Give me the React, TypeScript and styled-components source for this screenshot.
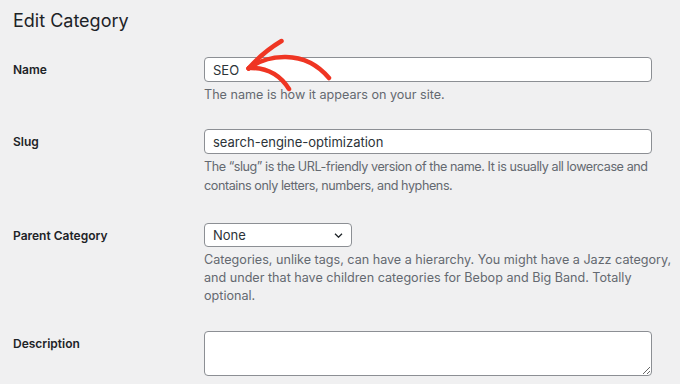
import styled, { createGlobalStyle } from "styled-components";

const GlobalStyle = createGlobalStyle`
  html, body {
    margin: 0;
    padding: 0;
    background: #f0f0f1;
  }
  body {
    font-family: Inter, "Noto Sans", "Liberation Sans", sans-serif;
    color: #1d2327;
  }
`;

const Page = styled.div`
  width: 680px;
  height: 384px;
  overflow: hidden;
  padding: 8px 28px 0 13px;
  box-sizing: border-box;
`;

const Heading = styled.h1`
  margin: 0;
  font-size: 18px;
  font-weight: 400;
  line-height: 25px;
  color: #1d2327;
`;

const FormTable = styled.div`
  display: flex;
  flex-direction: column;
  margin-top: 24px;
`;

const Row = styled.div<{ $top?: number }>`
  display: grid;
  grid-template-columns: 191px 448px;
  margin-top: ${(p) => p.$top ?? 0}px;
`;

const Label = styled.label`
  font-size: 12px;
  font-weight: 600;
  line-height: 25px;
  color: #1d2327;
`;

const Field = styled.div`
  position: relative;
  display: flex;
  flex-direction: column;
`;

const TextInput = styled.input`
  box-sizing: border-box;
  width: 100%;
  height: 25px;
  margin: 0;
  padding: 0 8px;
  border: 1px solid #8c8f94;
  border-radius: 4px;
  background: #fff;
  font-family: inherit;
  font-size: 13px;
  color: #2c3338;
  outline: none;
`;

const SelectWrap = styled.div`
  position: relative;
  width: 148px;
  height: 24px;
`;

const Select = styled.select`
  box-sizing: border-box;
  width: 100%;
  height: 100%;
  margin: 0;
  padding: 0 24px 0 8px;
  border: 1px solid #8c8f94;
  border-radius: 4px;
  background: #fff;
  font-family: inherit;
  font-size: 13px;
  color: #2c3338;
  appearance: none;
  outline: none;
`;

const Chevron = styled.svg`
  position: absolute;
  right: 9px;
  top: 10px;
  pointer-events: none;
`;

const TextArea = styled.textarea`
  box-sizing: border-box;
  width: 100%;
  height: 45px;
  margin: 0;
  padding: 4px 8px;
  border: 1px solid #8c8f94;
  border-radius: 4px;
  background: #fff;
  font-family: inherit;
  font-size: 13px;
  outline: none;
  display: block;
`;

const Help = styled.p<{ $tight?: boolean }>`
  margin: 4px 0 0;
  font-size: 12.6px;
  line-height: 18.3px;
  letter-spacing: ${(p) => (p.$tight ? "-0.42px" : "0")};
  color: #646970;
  white-space: nowrap;
`;

const Arrow = styled.svg`
  position: absolute;
  left: 42px;
  top: -19px;
  overflow: visible;
  pointer-events: none;
`;

const App = () => {
  return (
    <>
      <GlobalStyle />
      <Page>
        <Heading>Edit Category</Heading>
        <FormTable>
          <Row>
            <Label htmlFor="name">Name</Label>
            <Field>
              <TextInput id="name" defaultValue="SEO" />
              <Help>The name is how it appears on your site.</Help>
              <Arrow width="90" height="56" viewBox="0 0 90 56">
                <g fill="none" stroke="#ef3523" strokeWidth="4.5" strokeLinecap="round">
                  <path d="M2.5 30.5 Q17 14 35.5 3" />
                  <path d="M3 30 Q29 29 43 51" />
                  <path d="M2.5 30.5 C20 17 58 10 83 40" />
                </g>
              </Arrow>
            </Field>
          </Row>
          <Row $top={25}>
            <Label htmlFor="slug">Slug</Label>
            <Field>
              <TextInput id="slug" defaultValue="search-engine-optimization" />
              <Help $tight>
                The “slug” is the URL-friendly version of the name. It is usually all
                lowercase and
                <br />
                contains only letters, numbers, and hyphens.
              </Help>
            </Field>
          </Row>
          <Row $top={28}>
            <Label htmlFor="parent">Parent Category</Label>
            <Field>
              <SelectWrap>
                <Select id="parent" defaultValue="none">
                  <option value="none">None</option>
                </Select>
                <Chevron width="9" height="5" viewBox="0 0 9 5">
                  <path d="M1 0.8 L4.5 4.2 L8 0.8" fill="none" stroke="#1d2327" strokeWidth="1.3" />
                </Chevron>
              </SelectWrap>
              <Help>
                Categories, unlike tags, can have a hierarchy. You might have a Jazz category,
                <br />
                and under that have children categories for Bebop and Big Band. Totally
                <br />
                optional.
              </Help>
            </Field>
          </Row>
          <Row $top={25}>
            <Label htmlFor="description">Description</Label>
            <Field>
              <TextArea id="description" />
            </Field>
          </Row>
        </FormTable>
      </Page>
    </>
  );
};

export default App;
